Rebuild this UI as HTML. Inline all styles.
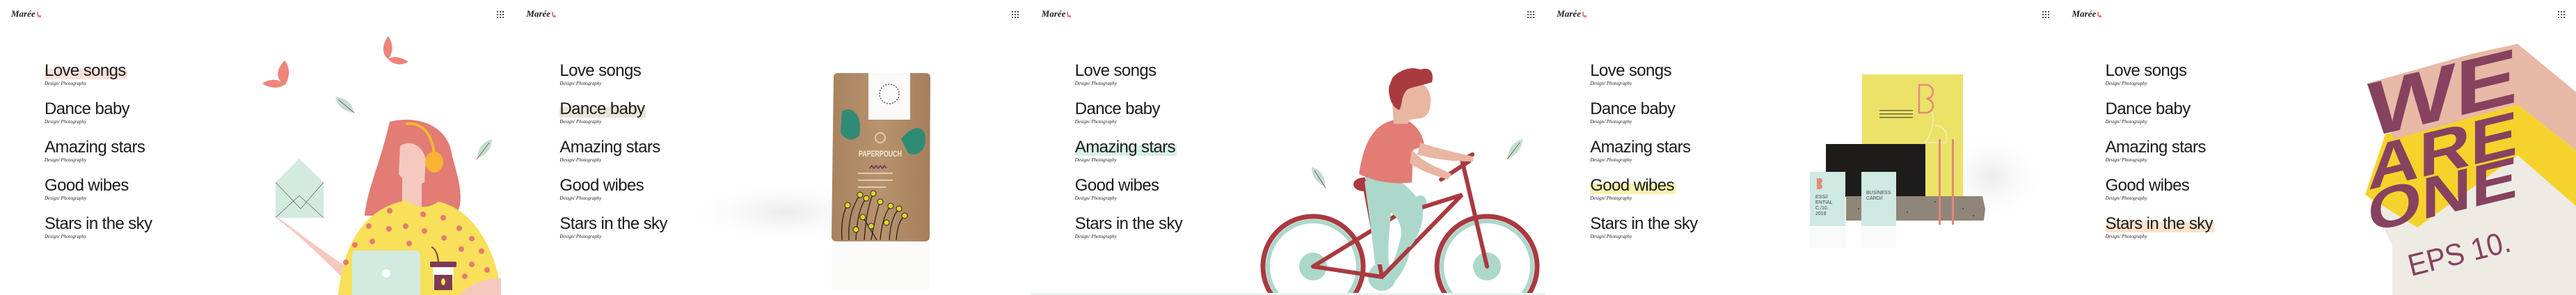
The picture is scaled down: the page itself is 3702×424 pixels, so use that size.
<!DOCTYPE html>
<html style="width:3702px;height:424px;overflow:hidden"><head><meta charset="utf-8"><style>
*{margin:0;padding:0;box-sizing:border-box}
body{width:3702px;height:424px;overflow:hidden;background:#fff;position:relative;font-family:"Liberation Sans",sans-serif}
.p{position:absolute;top:0;width:740.4px;height:424px;overflow:hidden;background:#fff}
.p svg.art{position:absolute;left:0;top:0;display:block}
.logo{position:absolute;left:16px;top:12px;font-family:"Liberation Serif",serif;font-style:italic;font-weight:bold;font-size:13px;color:#222}
.logo i{display:inline-block;width:6px;height:8px;border-left:2px solid #e8837a;border-bottom:3px solid #e8837a;border-radius:0 0 0 4px;margin-left:2px;vertical-align:-1px}
.grid{position:absolute;left:713px;top:15px;width:12px;height:12px;background-image:radial-gradient(circle,#333 0.9px,transparent 1.2px);background-size:4px 4px}
.list{position:absolute;left:64px;top:88px}
.it{height:55px}
.t{font-size:24px;color:#1a1a1a;letter-spacing:-0.6px;line-height:28px;display:inline-block;padding-right:2px}
.s{font-family:"Liberation Serif",serif;font-style:italic;font-size:7px;color:#222;line-height:8px}
.hl{background:linear-gradient(to bottom,transparent 38%,var(--c) 38%,var(--c) 92%,transparent 92%)}
</style></head><body>

<!-- Panel 1 -->
<div class="p" style="left:0">
<svg class="art" width="741" height="424" viewBox="0 0 741 424">
 <path d="M409 87 C396 100 396 115 410 122 C418 108 416 96 409 87Z" fill="#ef847b"/>
 <path d="M409 122 C400 112 388 113 377 120 C387 127 399 128 409 122Z" fill="#ef847b"/>
 <path d="M558 52 C548 65 549 78 558 85 C566 74 565 62 558 52Z" fill="#ef847b"/>
 <path d="M558 85 C566 79 578 83 587 89 C576 95 565 93 558 85Z" fill="#ef847b"/>
 <path d="M482 139 C500 141 508 152 508 162 C494 160 484 152 482 139Z" fill="#bfe0d5"/><path d="M486 143 L509 162" stroke="#b04a48" stroke-width="1"/>
 <path d="M707 200 C690 205 686 218 686 228 C700 222 707 212 707 200Z" fill="#bfe0d5"/><path d="M703 205 L685 229" stroke="#b04a48" stroke-width="1"/>
 <path d="M396 262 L430 228 L465 262 L465 313 L396 313Z" fill="#d3eadf"/>
 <path d="M396 262 L432 300 M465 262 L432 300 M396 313 L430 281 L465 313" stroke="#555" stroke-width="0.6" fill="none"/>
 <path d="M394 310 C400 318 415 322 490 397 L500 385 C440 345 410 318 394 310Z" fill="#f6c9bf"/>
 <path d="M560 175 C600 165 645 180 650 225 C660 260 668 290 655 310 L524 310 C528 270 545 240 560 175Z" fill="#e27c74"/>
 <path d="M575 210 C588 200 608 208 612 230 L610 262 C600 268 580 262 573 250Z" fill="#f6c9bf"/>
 <rect x="578" y="255" width="28" height="50" fill="#f6c9bf"/>
 <path d="M583 178 C605 175 620 190 624 220" stroke="#f8b332" stroke-width="4" fill="none"/>
 <ellipse cx="624" cy="233" rx="13" ry="15" fill="#f8b332"/>
 <path d="M486 424 C495 330 540 295 585 288 C600 300 615 300 630 290 C680 300 715 360 720 424Z" fill="#f8e05a"/>
 <g fill="#e47b72"><circle cx="560" cy="303" r="4"/><circle cx="608" cy="308" r="4"/><circle cx="637" cy="313" r="4"/><circle cx="530" cy="325" r="4"/><circle cx="559" cy="329" r="4"/><circle cx="583" cy="325" r="4"/><circle cx="610" cy="332" r="4"/><circle cx="660" cy="328" r="4"/><circle cx="535" cy="347" r="4"/><circle cx="588" cy="350" r="4"/><circle cx="638" cy="342" r="4"/><circle cx="678" cy="343" r="4"/><circle cx="510" cy="352" r="4"/><circle cx="663" cy="358" r="4"/><circle cx="692" cy="361" r="4"/><circle cx="497" cy="377" r="4"/><circle cx="678" cy="380" r="4"/><circle cx="700" cy="388" r="4"/><circle cx="668" cy="397" r="4"/></g>
 <path d="M660 424 C680 405 705 398 720 400 L720 424Z" fill="#f6c9bf"/>
 <path d="M512 360 L596 360 Q604 360 604 368 L604 424 L506 424 L506 368 Q506 360 512 360Z" fill="#d3eadf"/>
 <circle cx="555" cy="393" r="6" fill="#fff"/>
 <path d="M620 355 Q628 358 630 376" stroke="#6e3b4a" stroke-width="2" fill="none"/>
 <rect x="618" y="376" width="38" height="8" rx="2" fill="#7e3a55"/>
 <path d="M622 384 L652 384 L650 417 L624 417Z" fill="#fff"/><rect x="624" y="395" width="26" height="22" fill="#7e3a55"/>
 <ellipse cx="637" cy="405" rx="3" ry="5" fill="#f8e05a"/>
</svg>
<div class="logo">Marée<i></i></div><div class="grid"></div>
<div class="list">
 <div class="it"><div class="t hl" style="--c:#fbe1dc">Love songs</div><div class="s">Design/ Photography</div></div>
 <div class="it"><div class="t">Dance baby</div><div class="s">Design/ Photography</div></div>
 <div class="it"><div class="t">Amazing stars</div><div class="s">Design/ Photography</div></div>
 <div class="it"><div class="t">Good wibes</div><div class="s">Design/ Photography</div></div>
 <div class="it"><div class="t">Stars in the sky</div><div class="s">Design/ Photography</div></div>
</div>
</div>

<!-- Panel 2 -->
<div class="p" style="left:740.4px">
<svg class="art" width="741" height="424" viewBox="0 0 741 424">
 <defs>
  <radialGradient id="sh2" cx="0.5" cy="0.5" r="0.5"><stop offset="0" stop-color="#ebebeb"/><stop offset="1" stop-color="#fff" stop-opacity="0"/></radialGradient>
  <linearGradient id="kr" x1="0" x2="1"><stop offset="0" stop-color="#a9835f"/><stop offset="0.5" stop-color="#b8936e"/><stop offset="1" stop-color="#a57f5b"/></linearGradient>
 </defs>
 <ellipse cx="390" cy="305" rx="150" ry="50" fill="url(#sh2)"/>
 <rect x="455" y="348" width="140" height="70" fill="#f9f8f6" opacity="0.6"/>
 <path d="M458 110 Q458 105 465 105 L590 105 Q597 105 597 112 L596 340 Q596 347 588 347 L463 347 Q455 347 455 340Z" fill="url(#kr)"/>
 <rect x="508" y="105" width="60" height="67" fill="#fbfaf8"/>
 <circle cx="538" cy="135" r="14" fill="none" stroke="#555" stroke-width="1.5" stroke-dasharray="2 2"/>
 <path d="M470 160 C488 150 500 170 495 195 C485 205 472 200 468 190Z" fill="#2f8b75"/>
 <path d="M555 200 C570 180 590 178 590 200 C590 220 575 225 565 220Z" fill="#2f8b75"/>
 <circle cx="525" cy="198" r="7" fill="none" stroke="#e6c9a8" stroke-width="2"/>
 <text x="494" y="225" font-family="Liberation Sans" font-weight="bold" font-size="12" fill="#f3e7d8" textLength="62" lengthAdjust="spacingAndGlyphs">PAPERPOUCH</text>
 <path d="M510 242 l3-4 3 4 3-4 3 4 3-4 3 4 3-4 3 4" stroke="#6c2e5a" stroke-width="1.5" fill="none"/>
 <g fill="#e0ccb4"><rect x="493" y="248" width="50" height="2"/><rect x="493" y="258" width="50" height="2"/><rect x="493" y="268" width="40" height="2"/></g>
 <g stroke="#2a2320" stroke-width="1.3" fill="none"><path d="M470 345 Q468 310 478 295"/><path d="M480 345 Q478 305 496 280"/><path d="M490 345 Q492 300 505 285"/><path d="M502 345 Q505 300 515 278"/><path d="M512 345 Q520 300 525 290"/><path d="M525 345 Q528 310 540 296"/><path d="M538 345 Q540 312 552 300"/><path d="M548 345 Q550 318 560 310"/><path d="M520 345 Q505 320 500 312"/></g>
 <g fill="#e2d62a" stroke="#2a2320" stroke-width="1"><circle cx="478" cy="295" r="4"/><circle cx="496" cy="280" r="4"/><circle cx="505" cy="285" r="4"/><circle cx="515" cy="278" r="4"/><circle cx="525" cy="290" r="4"/><circle cx="540" cy="296" r="4"/><circle cx="552" cy="300" r="4"/><circle cx="560" cy="310" r="4"/><circle cx="500" cy="312" r="4"/><circle cx="490" cy="330" r="4"/><circle cx="512" cy="325" r="4"/><circle cx="534" cy="320" r="4"/></g>
</svg>
<div class="logo">Marée<i></i></div><div class="grid"></div>
<div class="list">
 <div class="it"><div class="t">Love songs</div><div class="s">Design/ Photography</div></div>
 <div class="it"><div class="t hl" style="--c:#ece4d6">Dance baby</div><div class="s">Design/ Photography</div></div>
 <div class="it"><div class="t">Amazing stars</div><div class="s">Design/ Photography</div></div>
 <div class="it"><div class="t">Good wibes</div><div class="s">Design/ Photography</div></div>
 <div class="it"><div class="t">Stars in the sky</div><div class="s">Design/ Photography</div></div>
</div>
</div>

<!-- Panel 3 -->
<div class="p" style="left:1480.8px">
<svg class="art" width="741" height="424" viewBox="0 0 741 424">
 <path d="M404 240 C418 244 424 255 423 268 C410 262 404 252 404 240Z" fill="#bfe0d5"/><path d="M408 245 L424 270" stroke="#b04a48" stroke-width="1"/>
 <path d="M707 200 C690 205 686 218 686 228 C700 222 707 212 707 200Z" fill="#bfe0d5"/><path d="M703 205 L685 229" stroke="#b04a48" stroke-width="1"/>
 <circle cx="406" cy="383" r="72" fill="none" stroke="#a93a40" stroke-width="7"/>
 <circle cx="406" cy="383" r="65" fill="none" stroke="#acd8cb" stroke-width="6"/>
 <circle cx="656" cy="383" r="72" fill="none" stroke="#a93a40" stroke-width="7"/>
 <circle cx="656" cy="383" r="65" fill="none" stroke="#acd8cb" stroke-width="6"/>
 <circle cx="406" cy="383" r="20" fill="#acd8cb"/><circle cx="656" cy="383" r="20" fill="#acd8cb"/>
 <circle cx="505" cy="398" r="20" fill="#acd8cb"/>
 <path d="M560 290 C535 345 540 370 520 395" stroke="#acd8cb" stroke-width="18" fill="none" stroke-linecap="round"/>
 <g stroke="#a93a40" stroke-width="6" fill="none" stroke-linecap="round">
  <path d="M406 383 L505 398 L620 280 L525 310 L406 383"/>
  <path d="M480 265 L505 398"/><path d="M620 230 L656 383"/><path d="M620 230 L635 222"/><path d="M590 258 L630 232"/>
 </g>
 <ellipse cx="480" cy="265" rx="16" ry="10" fill="#a93a40"/>
 <path d="M480 260 C485 300 490 330 495 380 L515 380 C512 340 520 310 520 265Z" fill="#acd8cb"/>
 <path d="M480 255 C500 240 530 250 560 290 C570 305 560 340 545 355 L530 350 C540 320 520 300 500 300 Z" fill="#acd8cb"/>
 <path d="M472 250 C480 200 495 180 520 173 L545 175 C560 185 565 200 566 210 L550 215 L548 262 C530 265 500 264 472 250Z" fill="#e27c74"/>
 <path d="M560 205 C590 215 615 220 636 225 L636 232 C610 232 585 230 556 222Z" fill="#e9b6a2"/>
 <path d="M548 215 C565 235 585 240 605 250 L600 258 C580 252 560 245 545 235Z" fill="#e9b6a2"/>
 <path d="M530 115 C555 112 575 120 575 145 C575 160 570 168 560 170 L545 172 L542 178 L522 178 L520 150Z" fill="#e9b6a2"/>
 <path d="M520 112 C530 100 548 95 560 100 C575 95 580 105 577 118 C560 124 545 125 540 130 C532 140 535 150 530 158 C520 155 514 140 515 125Z" fill="#a93a40"/>
 <rect x="0" y="421" width="741" height="3" fill="#e8f4f0"/>
</svg>
<div class="logo">Marée<i></i></div><div class="grid"></div>
<div class="list">
 <div class="it"><div class="t">Love songs</div><div class="s">Design/ Photography</div></div>
 <div class="it"><div class="t">Dance baby</div><div class="s">Design/ Photography</div></div>
 <div class="it"><div class="t hl" style="--c:#d8efe6">Amazing stars</div><div class="s">Design/ Photography</div></div>
 <div class="it"><div class="t">Good wibes</div><div class="s">Design/ Photography</div></div>
 <div class="it"><div class="t">Stars in the sky</div><div class="s">Design/ Photography</div></div>
</div>
</div>

<!-- Panel 4 -->
<div class="p" style="left:2221.2px">
<svg class="art" width="741" height="424" viewBox="0 0 741 424">
 <defs><radialGradient id="sh4" cx="0.5" cy="0.5" r="0.5"><stop offset="0" stop-color="#ececec"/><stop offset="1" stop-color="#fff" stop-opacity="0"/></radialGradient></defs>
 <ellipse cx="640" cy="255" rx="80" ry="70" fill="url(#sh4)"/>
 <rect x="455" y="107" width="145" height="175" fill="#ece268"/>
 <path d="M537 122 h10 a10 10 0 0 1 0 20 a10 10 0 0 1 0 20 h-10z" fill="none" stroke="#e58a7d" stroke-width="2.5"/>
 <g fill="#6a6640"><rect x="480" y="158" width="48" height="1.5"/><rect x="480" y="163" width="48" height="1.5"/><rect x="480" y="168" width="48" height="1.5"/></g>
 <path d="M555 160 C560 170 555 195 545 205 L575 205 C580 190 570 180 560 180" stroke="#f5f0c8" stroke-width="1.2" fill="none"/>
 <rect x="403" y="207" width="143" height="76" fill="#1e1c1b"/>
 <path d="M432 282 L628 282 L632 300 L630 317 L432 317Z" fill="#8f8578"/>
 <g fill="#4a433c"><circle cx="450" cy="300" r="1"/><circle cx="480" cy="295" r="1"/><circle cx="520" cy="305" r="1"/><circle cx="560" cy="290" r="1"/><circle cx="600" cy="300" r="1"/><circle cx="615" cy="310" r="1"/></g>
 <rect x="380" y="247" width="51" height="78" fill="#cfe9e3"/>
 <rect x="454" y="247" width="50" height="78" fill="#cfe9e3"/>
 <text x="388" y="285" font-family="Liberation Sans" font-size="7" fill="#444">ESS//</text>
 <text x="388" y="293" font-family="Liberation Sans" font-size="7" fill="#444">ENTIAL</text>
 <text x="388" y="301" font-family="Liberation Sans" font-size="7" fill="#444">C./10.</text>
 <text x="388" y="309" font-family="Liberation Sans" font-size="7" fill="#444">2018</text>
 <text x="461" y="279" font-family="Liberation Sans" font-size="7" fill="#444">BUSINESS</text>
 <text x="461" y="287" font-family="Liberation Sans" font-size="7" fill="#444">CARD//</text>
 <path d="M390 256 h4 a4 4 0 0 1 0 8 a4 4 0 0 1 0 8 h-4z" fill="#e58a7d"/>
 <rect x="565" y="200" width="3" height="123" fill="#e0877c"/><rect x="584" y="200" width="3" height="123" fill="#e0877c"/>
 <rect x="380" y="326" width="51" height="30" fill="#f5f7f6" opacity="0.6"/><rect x="454" y="326" width="50" height="30" fill="#f5f7f6" opacity="0.6"/>
</svg>
<div class="logo">Marée<i></i></div><div class="grid"></div>
<div class="list">
 <div class="it"><div class="t">Love songs</div><div class="s">Design/ Photography</div></div>
 <div class="it"><div class="t">Dance baby</div><div class="s">Design/ Photography</div></div>
 <div class="it"><div class="t">Amazing stars</div><div class="s">Design/ Photography</div></div>
 <div class="it"><div class="t hl" style="--c:#fbf1ae">Good wibes</div><div class="s">Design/ Photography</div></div>
 <div class="it"><div class="t">Stars in the sky</div><div class="s">Design/ Photography</div></div>
</div>
</div>

<!-- Panel 5 -->
<div class="p" style="left:2961.6px">
<svg class="art" width="741" height="424" viewBox="0 0 741 424">
 <polygon points="439,277 476,353 476,424 741,424 741,297 656,223" fill="#edebe4"/>
 <polygon points="437,280 466,193 656,150 741,217 741,297 656,223 512,327" fill="#f6d22c"/>
 <polygon points="439,120 592,77 656,63 741,133 741,217 656,150 479,200" fill="#e7b9a6"/>
 <g font-family="Liberation Sans" font-weight="bold" fill="#86425f">
  <text transform="translate(440,198) skewY(-13.5)" font-size="112" textLength="216" lengthAdjust="spacingAndGlyphs">WE</text>
  <text transform="translate(441,273) skewY(-13.5)" font-size="90" textLength="215" lengthAdjust="spacingAndGlyphs">ARE</text>
  <text transform="translate(441,334) skewY(-13.5)" font-size="84" textLength="215" lengthAdjust="spacingAndGlyphs">ONE</text>
 </g>
 <text transform="translate(503,397) rotate(-14)" font-family="Liberation Sans" font-size="44" fill="#86425f" textLength="150" lengthAdjust="spacingAndGlyphs">EPS 10.</text>
</svg>
<div class="logo">Marée<i></i></div><div class="grid"></div>
<div class="list">
 <div class="it"><div class="t">Love songs</div><div class="s">Design/ Photography</div></div>
 <div class="it"><div class="t">Dance baby</div><div class="s">Design/ Photography</div></div>
 <div class="it"><div class="t">Amazing stars</div><div class="s">Design/ Photography</div></div>
 <div class="it"><div class="t">Good wibes</div><div class="s">Design/ Photography</div></div>
 <div class="it"><div class="t hl" style="--c:#fde2cb">Stars in the sky</div><div class="s">Design/ Photography</div></div>
</div>
</div>
</body></html>
